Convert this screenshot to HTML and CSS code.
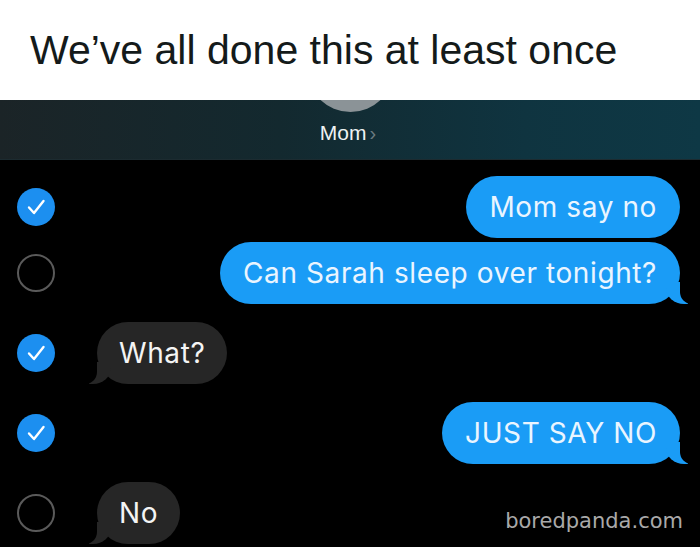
FILE: index.html
```html
<!DOCTYPE html>
<html>
<head>
<meta charset="utf-8">
<link rel="stylesheet" href="styles.css">
</head>
<body>
<div class="page">
  <div class="caption">We’ve all done this at least once</div>
  <div class="thread-header">
    <div class="avatar"></div>
    <div class="contact">Mom<span class="chev">›</span></div>
  </div>
  <div class="messages">
    <div class="row">
      <span class="select on"><svg viewBox="0 0 38 38" width="38" height="38"><circle cx="19" cy="19" r="19" fill="#1c8ff0"/><path d="M12 19.5 L17 25 L26.5 13" fill="none" stroke="#fff" stroke-width="2.4" stroke-linecap="round" stroke-linejoin="round"/></svg></span>
      <div class="bubble sent">Mom say no</div>
    </div>
    <div class="row tight">
      <span class="select off"></span>
      <div class="bubble sent tail">Can Sarah sleep over tonight?</div>
    </div>
    <div class="row">
      <span class="select on"><svg viewBox="0 0 38 38" width="38" height="38"><circle cx="19" cy="19" r="19" fill="#1c8ff0"/><path d="M12 19.5 L17 25 L26.5 13" fill="none" stroke="#fff" stroke-width="2.4" stroke-linecap="round" stroke-linejoin="round"/></svg></span>
      <div class="bubble recv tail">What?</div>
    </div>
    <div class="row">
      <span class="select on"><svg viewBox="0 0 38 38" width="38" height="38"><circle cx="19" cy="19" r="19" fill="#1c8ff0"/><path d="M12 19.5 L17 25 L26.5 13" fill="none" stroke="#fff" stroke-width="2.4" stroke-linecap="round" stroke-linejoin="round"/></svg></span>
      <div class="bubble sent tail">JUST SAY NO</div>
    </div>
    <div class="row last">
      <span class="select off"></span>
      <div class="bubble recv tail">No</div>
      <div class="watermark">boredpanda.com</div>
    </div>
  </div>
</div>
</body>
</html>
```
FILE: styles.css
```css
html, body {
  margin: 0;
  padding: 0;
  background: #000;
}
.page {
  width: 700px;
  height: 547px;
  overflow: hidden;
  display: flex;
  flex-direction: column;
}
.caption {
  height: 100px;
  background: #fff;
  box-sizing: border-box;
  padding: 27px 0 0 30px;
  font-family: "Liberation Sans", Arial, sans-serif;
  font-size: 41px;
  line-height: 46px;
  color: #141a1a;
}
.thread-header {
  height: 60px;
  background: linear-gradient(90deg, #1b2427 0%, #13292f 40%, #0f3440 75%, #0e3845 100%);
  border-bottom: 1px solid #1c2b30;
  box-sizing: border-box;
  display: flex;
  flex-direction: column;
  align-items: center;
  overflow: hidden;
}
.avatar {
  width: 87px;
  height: 87px;
  border-radius: 50%;
  background: #8b9397;
  margin-top: -75px;
  flex: none;
}
.contact {
  margin-top: 9px;
  margin-right: 4px;
  font-family: "Liberation Sans", Arial, sans-serif;
  font-size: 21px;
  color: #eef2f3;
}
.chev {
  color: #6c7b80;
  margin-left: 3px;
  font-size: 20px;
}
.messages {
  flex: 1;
  background: #000;
  padding-top: 16px;
}
.row {
  display: flex;
  align-items: center;
  padding: 0 20px 0 17px;
  margin-top: 18px;
  position: relative;
}
.row:first-child { margin-top: 0; }
.row.tight { margin-top: 4px; }
.select {
  width: 38px;
  height: 38px;
  flex: none;
  box-sizing: border-box;
  border-radius: 50%;
}
.select svg { display: block; }
.select.off {
  border: 2px solid #5a5a5a;
}
.bubble {
  position: relative;
  height: 62px;
  border-radius: 31px;
  box-sizing: border-box;
  padding: 0 23px;
  display: flex;
  align-items: center;
  font-family: Inter, "Liberation Sans", sans-serif;
  font-size: 28px;
  letter-spacing: 0.6px;
  color: #eaf5ff;
  white-space: nowrap;
}
.bubble.sent {
  margin-left: auto;
  background: #1a9cf6;
}
.bubble.recv {
  margin-left: 42px;
  background: #262626;
  color: #f4f4f4;
  padding: 0 22px;
}
.bubble.sent.tail::before {
  content: "";
  position: absolute;
  bottom: 0;
  right: -8px;
  width: 22px;
  height: 22px;
  background: #1a9cf6;
  border-bottom-left-radius: 18px 16px;
}
.bubble.sent.tail::after {
  content: "";
  position: absolute;
  bottom: 0;
  right: -28px;
  width: 28px;
  height: 24px;
  background: #000;
  border-bottom-left-radius: 12px;
}
.bubble.recv.tail::before {
  content: "";
  position: absolute;
  bottom: 0;
  left: -8px;
  width: 22px;
  height: 22px;
  background: #262626;
  border-bottom-right-radius: 18px 16px;
}
.bubble.recv.tail::after {
  content: "";
  position: absolute;
  bottom: 0;
  left: -28px;
  width: 28px;
  height: 24px;
  background: #000;
  border-bottom-right-radius: 12px;
}
.row.last {
  align-items: flex-start;
}
.row.last .select { margin-top: 12px; }
.watermark {
  margin-left: auto;
  margin-right: -3px;
  margin-top: 27px;
  font-family: "DejaVu Sans", sans-serif;
  font-size: 21px;
  color: #a9a9a9;
}
```
